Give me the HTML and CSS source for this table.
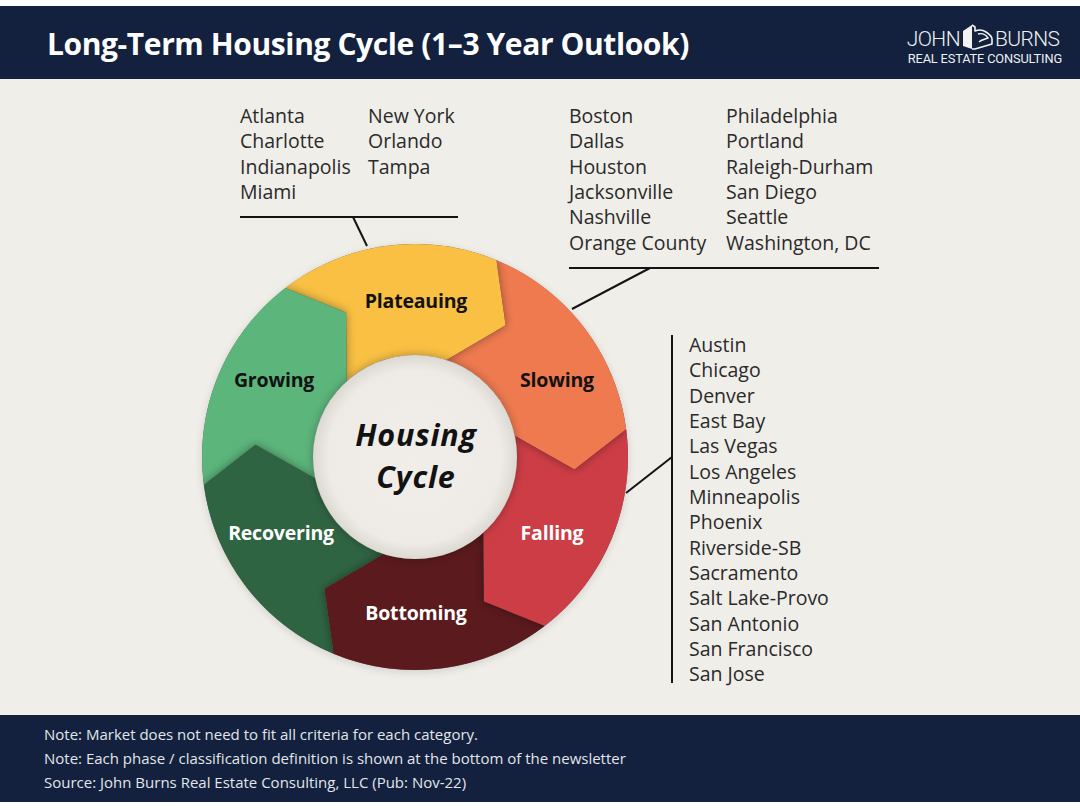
FILE: index.html
```html
<!DOCTYPE html>
<html lang="en">
<head>
<meta charset="utf-8">
<title>Long-Term Housing Cycle</title>
<link rel="stylesheet" href="styles.css">
</head>
<body>
<div class="page">
  <header class="bar">
    <h1 class="title">Long-Term Housing Cycle (1–3 Year Outlook)</h1>
    <div class="logo">
      <div class="logo-top">
        <span class="logo-word">JOHN</span>
        <svg class="logo-icon" viewBox="0 0 34 27" width="34" height="27" aria-hidden="true">
          <path d="M3 8 L12 2 L12 26 L3 23 Z" fill="#f2f2f2"/>
          <path d="M12 2 L15 4 L15 8 C19 6.5 23 7 26 9 C29 11 32 13 32 16 L32 21 L15 26 L12 26" fill="none" stroke="#f2f2f2" stroke-width="1.6" stroke-linejoin="round"/>
          <path d="M18 11 C22 10 26 12 28 15 C25 16 21 17 19 19" fill="none" stroke="#f2f2f2" stroke-width="1.4"/>
        </svg>
        <span class="logo-word">BURNS</span>
      </div>
      <div class="logo-sub">REAL ESTATE CONSULTING</div>
    </div>
  </header>

  <main class="canvas">
    <svg class="diagram" viewBox="0 0 1080 636" width="1080" height="636">
      <defs>
        <path id="s0" d="M -129.67 -169.0 A 213 213 0 0 1 81.51 -196.79 L 90.62 -131.86 L 31.52 -97.01 A 102 102 0 0 0 -68.25 -75.80 L -68.88 -144.42 Z"/>
        <path id="s1" d="M 81.51 -196.79 A 213 213 0 0 1 211.17 -27.80 L 159.51 12.56 L 99.77 -21.21 A 102 102 0 0 0 31.52 -97.01 L 90.62 -131.86 Z"/>
        <path id="s2" d="M 211.17 -27.80 A 213 213 0 0 1 129.67 169.0 L 68.88 144.42 L 68.25 75.80 A 102 102 0 0 0 99.77 -21.21 L 159.51 12.56 Z"/>
        <path id="s3" d="M 129.67 169.0 A 213 213 0 0 1 -81.51 196.79 L -90.62 131.86 L -31.52 97.01 A 102 102 0 0 0 68.25 75.80 L 68.88 144.42 Z"/>
        <path id="s4" d="M -81.51 196.79 A 213 213 0 0 1 -211.17 27.80 L -159.51 -12.56 L -99.77 21.21 A 102 102 0 0 0 -31.52 97.01 L -90.62 131.86 Z"/>
        <path id="s5" d="M -211.17 27.80 A 213 213 0 0 1 -129.67 -169.0 L -68.88 -144.42 L -68.25 -75.80 A 102 102 0 0 0 -99.77 21.21 L -159.51 -12.56 Z"/>
        <clipPath id="c0"><use href="#s0"/></clipPath>
        <clipPath id="c1"><use href="#s1"/></clipPath>
        <clipPath id="c2"><use href="#s2"/></clipPath>
        <clipPath id="c3"><use href="#s3"/></clipPath>
        <clipPath id="c4"><use href="#s4"/></clipPath>
        <clipPath id="c5"><use href="#s5"/></clipPath>
        <filter id="hs" x="-30%" y="-30%" width="160%" height="160%">
          <feGaussianBlur in="SourceAlpha" stdDeviation="5" result="b"/>
          <feFlood flood-color="#000" flood-opacity="0.38"/>
          <feComposite in2="b" operator="in"/>
        </filter>
        <filter id="ws" x="-20%" y="-20%" width="140%" height="140%">
          <feGaussianBlur in="SourceAlpha" stdDeviation="4" result="b"/>
          <feOffset dy="2" in="b" result="o"/>
          <feFlood flood-color="#000" flood-opacity="0.22"/>
          <feComposite in2="o" operator="in" result="sh"/>
          <feMerge><feMergeNode in="sh"/><feMergeNode in="SourceGraphic"/></feMerge>
        </filter>
        <filter id="is" x="-30%" y="-30%" width="160%" height="160%">
          <feGaussianBlur in="SourceAlpha" stdDeviation="5" result="b"/>
          <feFlood flood-color="#000" flood-opacity="0.3"/>
          <feComposite in2="b" operator="in" result="sh"/>
          <feMerge><feMergeNode in="sh"/><feMergeNode in="SourceGraphic"/></feMerge>
        </filter>
        <radialGradient id="ig" cx="50%" cy="50%" r="50%">
          <stop offset="0%" stop-color="#f1eee9"/>
          <stop offset="85%" stop-color="#eeebe6"/>
          <stop offset="100%" stop-color="#dcd8d2"/>
        </radialGradient>
      </defs>

      <g class="connectors">
        <line x1="240" y1="138" x2="458" y2="138"/>
        <line x1="353" y1="138" x2="367" y2="167"/>
        <line x1="569" y1="189" x2="879" y2="189"/>
        <line x1="650" y1="189" x2="572" y2="230"/>
        <line x1="672" y1="256" x2="672" y2="604"/>
        <line x1="626" y1="414" x2="672" y2="378"/>
      </g>

      <g transform="translate(415 378)">
        <circle r="213" fill="#000" filter="url(#ws)" opacity="0.6"/>
        <use href="#s0" fill="#f9c043"/>
        <use href="#s1" fill="#ef7a4f"/>
        <use href="#s2" fill="#cd3d46"/>
        <use href="#s3" fill="#5b1a1d"/>
        <use href="#s4" fill="#2f6443"/>
        <use href="#s5" fill="#5cb57b"/>

        <g clip-path="url(#c1)"><use href="#s0" filter="url(#hs)"/></g>
        <g clip-path="url(#c2)"><use href="#s1" filter="url(#hs)"/></g>
        <g clip-path="url(#c3)"><use href="#s2" filter="url(#hs)"/></g>
        <g clip-path="url(#c4)"><use href="#s3" filter="url(#hs)"/></g>
        <g clip-path="url(#c5)"><use href="#s4" filter="url(#hs)"/></g>
        <g clip-path="url(#c0)"><use href="#s5" filter="url(#hs)"/></g>

        <circle r="102" fill="url(#ig)" filter="url(#is)"/>

        <text class="seg-label dark" x="1" y="-149">Plateauing</text>
        <text class="seg-label dark" x="142" y="-70">Slowing</text>
        <text class="seg-label light" x="137" y="83">Falling</text>
        <text class="seg-label light" x="1" y="163">Bottoming</text>
        <text class="seg-label light" x="-134" y="83">Recovering</text>
        <text class="seg-label dark" x="-141" y="-70">Growing</text>

        <text class="hub-label" x="1" y="-11">Housing</text>
        <text class="hub-label" x="1" y="31">Cycle</text>
      </g>
    </svg>

    <div class="list list-plateau">
      <ul class="col col-a">
        <li>Atlanta</li><li>Charlotte</li><li>Indianapolis</li><li>Miami</li>
      </ul>
      <ul class="col">
        <li>New York</li><li>Orlando</li><li>Tampa</li>
      </ul>
    </div>

    <div class="list list-slowing">
      <ul class="col col-b">
        <li>Boston</li><li>Dallas</li><li>Houston</li><li>Jacksonville</li><li>Nashville</li><li>Orange County</li>
      </ul>
      <ul class="col">
        <li>Philadelphia</li><li>Portland</li><li>Raleigh-Durham</li><li>San Diego</li><li>Seattle</li><li>Washington, DC</li>
      </ul>
    </div>

    <div class="list list-falling">
      <ul class="col">
        <li>Austin</li><li>Chicago</li><li>Denver</li><li>East Bay</li><li>Las Vegas</li><li>Los Angeles</li><li>Minneapolis</li><li>Phoenix</li><li>Riverside-SB</li><li>Sacramento</li><li>Salt Lake-Provo</li><li>San Antonio</li><li>San Francisco</li><li>San Jose</li>
      </ul>
    </div>
  </main>

  <footer class="foot">
    <p>Note: Market does not need to fit all criteria for each category.</p>
    <p>Note: Each phase / classification definition is shown at the bottom of the newsletter</p>
    <p>Source: John Burns Real Estate Consulting, LLC (Pub: Nov-22)</p>
  </footer>
</div>
</body>
</html>
```

FILE: styles.css
```css
* { box-sizing: border-box; }

html, body {
  margin: 0;
  padding: 0;
  background: #ffffff;
}

body {
  font-family: "Open Sans", "Liberation Sans", sans-serif;
}

.page {
  width: 1080px;
  padding-top: 6px;
}

.bar {
  height: 73px;
  background: #13213e;
  display: flex;
  align-items: center;
  justify-content: space-between;
  padding: 0 18px 0 47px;
}

.title {
  margin: 0;
  color: #ffffff;
  font-family: "Open Sans", "Liberation Sans", sans-serif;
  font-weight: 700;
  font-size: 30px;
  letter-spacing: -0.4px;
  line-height: 1;
  padding-top: 2px;
}

.logo {
  display: flex;
  flex-direction: column;
  align-items: flex-start;
  color: #eef0f3;
  font-family: "Roboto", "Liberation Sans", sans-serif;
  font-weight: 300;
  padding-top: 2px;
}

.logo-top {
  display: flex;
  align-items: flex-end;
  height: 28px;
}

.logo-word {
  font-size: 21px;
  line-height: 21px;
  letter-spacing: -0.6px;
}

.logo-icon {
  margin: 0 1px 0 0;
  display: block;
}

.logo-sub {
  font-size: 12.8px;
  letter-spacing: -0.15px;
  line-height: 13px;
  margin-top: 2px;
  margin-left: 1px;
  font-weight: 400;
}

.canvas {
  position: relative;
  height: 636px;
  background: #f0eee9;
}

.diagram {
  display: block;
}

.connectors line {
  stroke: #141414;
  stroke-width: 2;
}

.seg-label {
  font-family: "Open Sans", "Liberation Sans", sans-serif;
  font-weight: 700;
  font-size: 19.5px;
  text-anchor: middle;
  letter-spacing: -0.2px;
}

.seg-label.dark { fill: #121212; }
.seg-label.light { fill: #ffffff; }

.hub-label {
  font-family: "Open Sans", "Liberation Sans", sans-serif;
  font-weight: 700;
  font-style: italic;
  font-size: 30.5px;
  text-anchor: middle;
  fill: #121212;
  letter-spacing: 0.8px;
}

.list {
  position: absolute;
  display: flex;
  color: #2a2a2a;
  font-size: 19.5px;
  line-height: 25.35px;
}

.list ul {
  list-style: none;
  margin: 0;
  padding: 0;
}

.list-plateau { left: 240px; top: 24px; }
.list-slowing { left: 569px; top: 24px; }
.list-falling { left: 689px; top: 253px; }

.col-a { width: 128px; }
.col-b { width: 157px; }

.foot {
  height: 87px;
  background: #13213e;
  color: #e2e5ea;
  padding: 7px 0 0 44px;
  font-family: "Open Sans", "Liberation Sans", sans-serif;
  font-size: 15px;
  line-height: 24px;
}

.foot p {
  margin: 0;
}
```
